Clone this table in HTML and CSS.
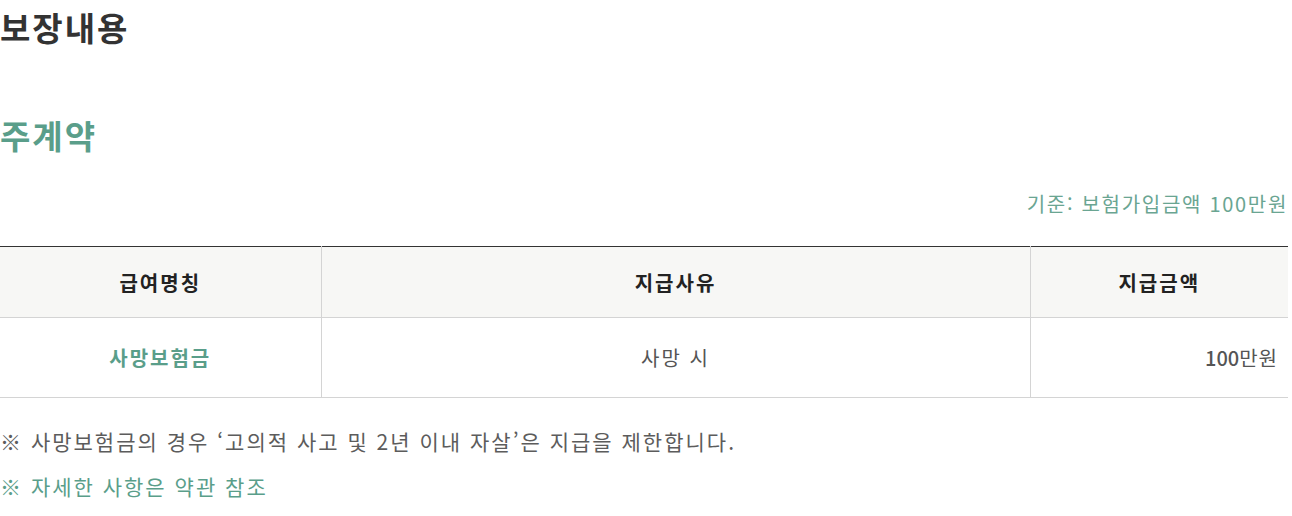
FILE: index.html
```html
<!DOCTYPE html>
<html lang="ko">
<head>
<meta charset="utf-8">
<link rel="stylesheet" href="styles.css">
</head>
<body>
<div class="page">
  <h1 class="title">보장내용</h1>
  <h2 class="subtitle">주계약</h2>
  <p class="basis">기준: 보험가입금액 100만원</p>
  <table class="cover">
    <colgroup>
      <col class="c1"><col class="c2"><col class="c3">
    </colgroup>
    <thead>
      <tr><th>급여명칭</th><th>지급사유</th><th>지급금액</th></tr>
    </thead>
    <tbody>
      <tr>
        <td class="name">사망보험금</td>
        <td class="reason">사망 시</td>
        <td class="amount"><b>100</b>만원</td>
      </tr>
    </tbody>
  </table>
  <ul class="notes">
    <li>※ 사망보험금의 경우 ‘고의적 사고 및 2년 이내 자살’은 지급을 제한합니다.</li>
    <li class="green">※ 자세한 사항은 약관 참조</li>
  </ul>
</div>
</body>
</html>
```
FILE: styles.css
```css
html, body { margin: 0; padding: 0; background: #fff; }
body { font-family: "Noto Sans CJK KR", "Noto Sans", sans-serif; color: #333; }
.page { width: 1288px; }
.title { margin: 0; padding-top: 4px; font-size: 33px; font-weight: 700; line-height: 46px; color: #333; letter-spacing: 2px; }
.subtitle { margin: 0; padding-top: 62px; font-size: 33px; font-weight: 700; line-height: 46px; color: #5a9e8a; letter-spacing: 2px; }
.basis { margin: 0; padding-top: 31px; text-align: right; font-size: 20px; line-height: 30px; color: #6aa592; letter-spacing: 1.7px; }
.cover { margin-top: 27px; width: 1288px; border-collapse: collapse; table-layout: fixed; border-top: 1px solid #333; }
.c1 { width: 321px; }
.c2 { width: 709px; }
.c3 { width: 258px; }
.cover th { height: 70px; padding: 0; background: #f7f7f5; font-size: 20px; font-weight: 700; color: #222; letter-spacing: 2px; border-bottom: 1px solid #d4d4d4; border-left: 1px solid #d4d4d4; }
.cover td { height: 79px; padding: 0; font-size: 20px; color: #555; text-align: center; letter-spacing: 2px; border-bottom: 1px solid #d4d4d4; border-left: 1px solid #d4d4d4; }
.cover th:first-child, .cover td:first-child { border-left: none; }
.cover td.name { color: #5a9e8a; font-weight: 700; }
.cover td.amount { text-align: right; padding-right: 10px; letter-spacing: 1px; }
.cover td.amount b { font-weight: 500; color: #555; letter-spacing: 0; }
.notes { list-style: none; margin: 0; padding: 21px 0 0; }
.notes li { font-size: 21px; line-height: 45px; color: #5c5c5c; letter-spacing: 2px; }
.notes li.green { color: #5a9e8a; }
```
